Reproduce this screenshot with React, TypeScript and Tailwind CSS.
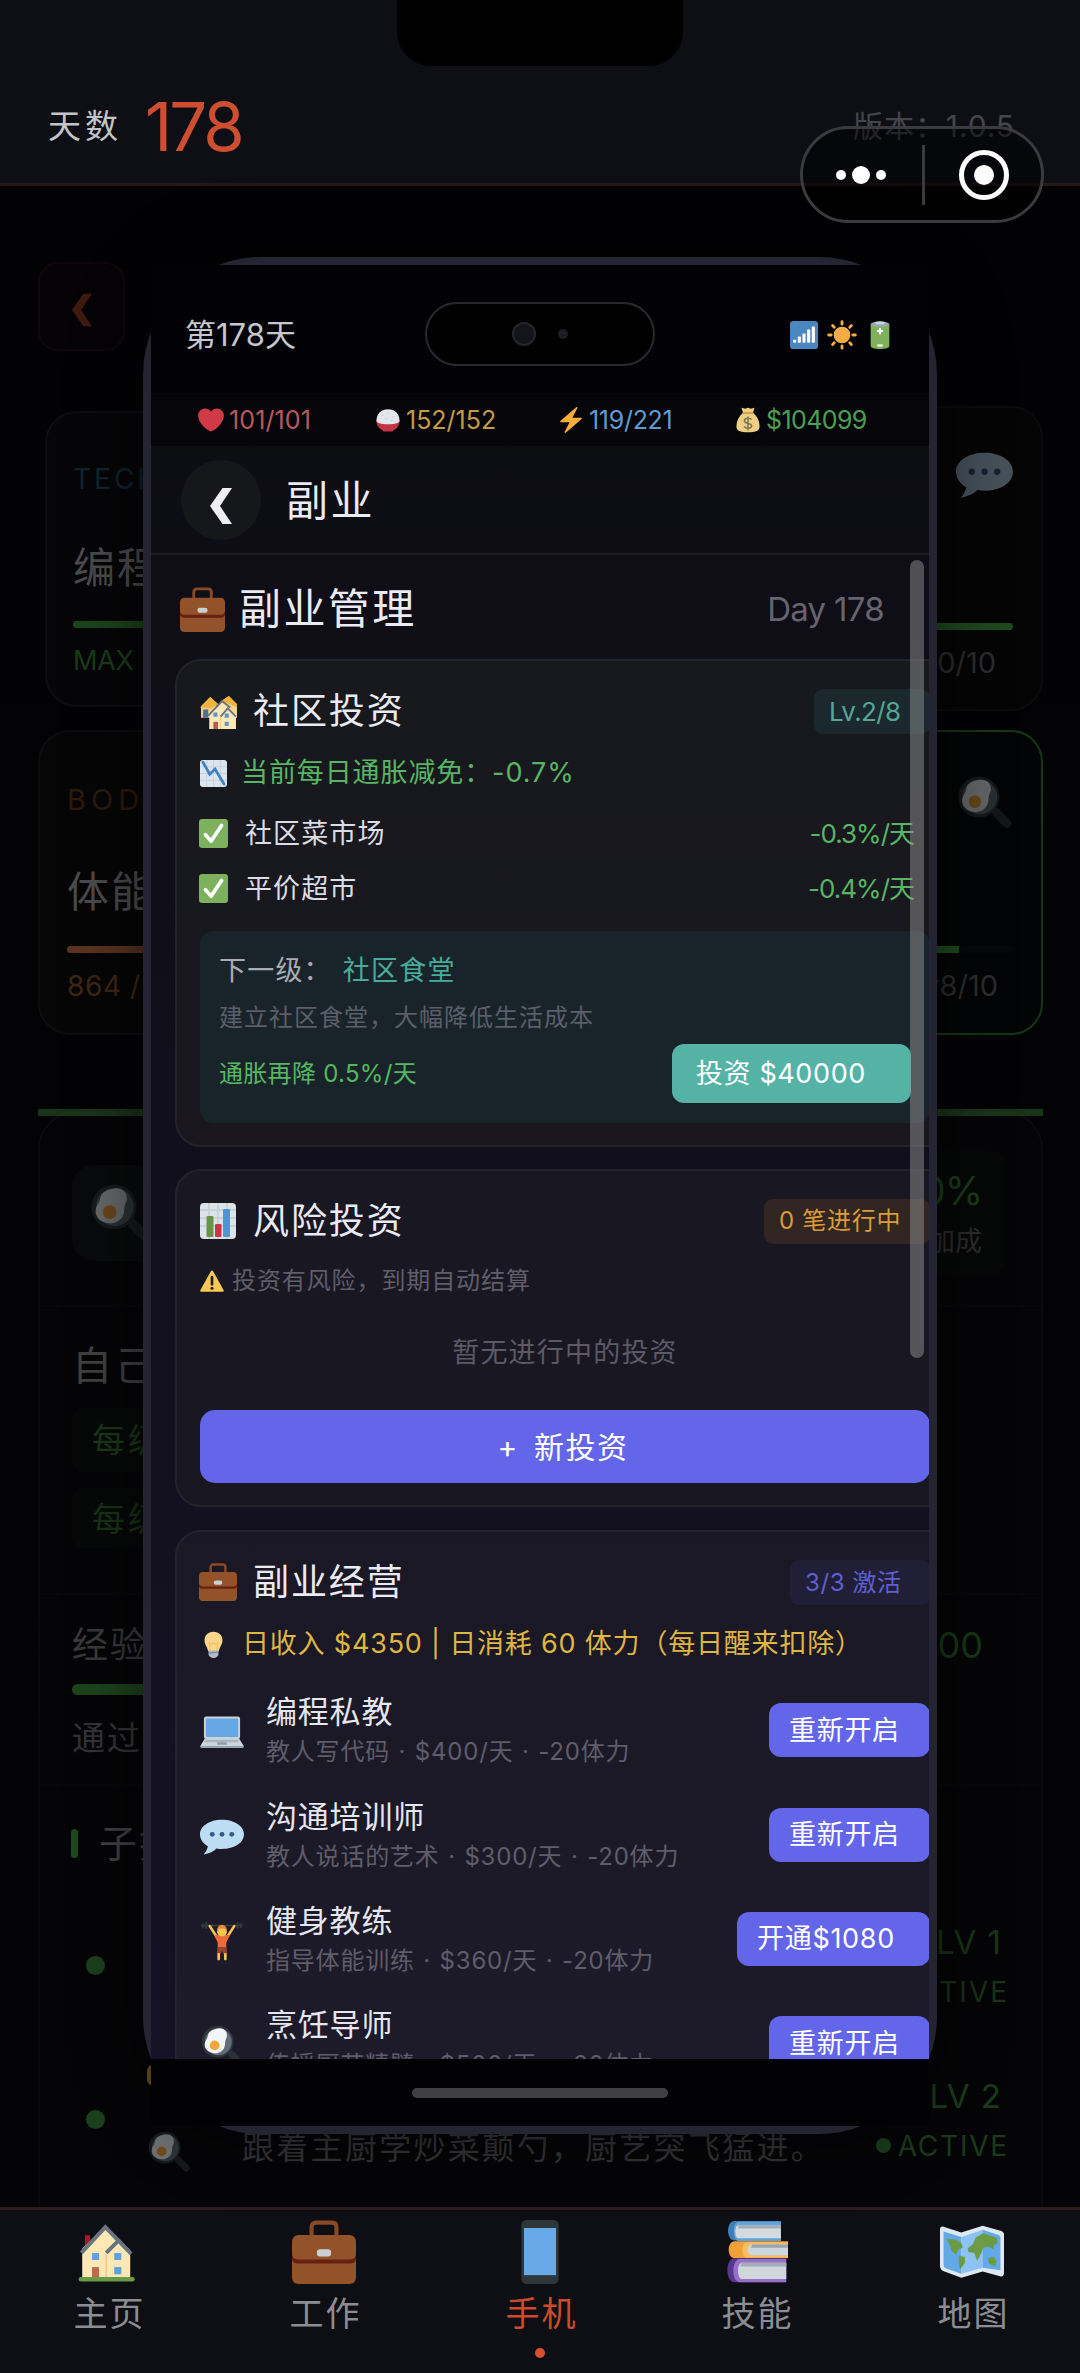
import clsx from "clsx";
import React from "react";

type IconProps = {
  className?: string;
};

function Svg({ className, children }: IconProps & { children: React.ReactNode }) {
  return (
    <svg viewBox="0 0 36 36" className={clsx("shrink-0", className)}>
      {children}
    </svg>
  );
}

function SignalIcon({ className }: IconProps) {
  return (
    <Svg className={className}>
      <rect width="36" height="36" rx="4" fill="#4a86bf" />
      <g fill="#fff">
        <rect x="4" y="24" width="4" height="4" rx="1" />
        <rect x="10" y="20" width="4" height="8" rx="1" />
        <rect x="16" y="16" width="4" height="12" rx="1" />
        <rect x="22" y="11" width="4" height="17" rx="1" />
        <rect x="28" y="7" width="4" height="21" rx="1" />
      </g>
    </Svg>
  );
}

function SunIcon({ className }: IconProps) {
  return (
    <Svg className={className}>
      <circle cx="18" cy="18" r="10" fill="#f3ac44" />
      <path
        d="M18 2v3M18 31v3M2 18h3M31 18h3M6.7 6.7l2 2M27.3 27.3l2 2M6.7 29.3l2-2M27.3 8.7l2-2"
        stroke="#f3ac44"
        strokeWidth="3.4"
        strokeLinecap="round"
      />
    </Svg>
  );
}

function BatteryIcon({ className }: IconProps) {
  return (
    <Svg className={className}>
      <path d="M6 4h24v28c0 2-5 4-12 4S6 34 6 32z" fill="#7eb15a" />
      <ellipse cx="18" cy="4" rx="12" ry="3.6" fill="#99aab5" />
      <ellipse cx="18" cy="2.5" rx="6" ry="2" fill="#ccd6dd" />
      <path d="M18 9v8M14 13h8M14.5 31.5h7" stroke="#fff" strokeWidth="2.6" />
    </Svg>
  );
}

function HeartIcon({ className }: IconProps) {
  return (
    <Svg className={className}>
      <path
        fill="#d03a46"
        d="M35.885 11.833c0-5.45-4.418-9.868-9.867-9.868-3.308 0-6.227 1.633-8.018 4.129-1.791-2.496-4.71-4.129-8.017-4.129-5.45 0-9.868 4.417-9.868 9.868 0 .772.098 1.52.266 2.241C1.751 22.587 11.216 31.568 18 34.034c6.783-2.466 16.249-11.447 17.617-19.959.17-.721.268-1.469.268-2.242z"
      />
    </Svg>
  );
}

function RiceIcon({ className }: IconProps) {
  return (
    <Svg className={className}>
      <path d="M2 19h32c0 7-4 11-9 13.500V34H11v-1.500C6 30 2 26 2 19z" fill="#c23542" />
      <path d="M2 19C2 9 9 3 18 3s16 6 16 16c0 3-6 5-16 5S2 22 2 19z" fill="#e3e6ea" />
      <path d="M9 12l3-1M17 8l3 1M24 13l2 1M14 17l3-1M22 19l3-1" stroke="#c5ced6" strokeWidth="1.300" />
    </Svg>
  );
}

function BoltIcon({ className }: IconProps) {
  return (
    <Svg className={className}>
      <path
        fill="#fbab38"
        d="M32.938 15.651C32.792 15.26 32.418 15 32 15H19.925L26.89 1.458c.219-.426.106-.947-.271-1.243C26.437.071 26.218 0 26 0c-.233 0-.466.082-.653.243L18 6.588 3.347 19.243c-.316.273-.43.714-.284 1.105S3.582 21 4 21h12.075L9.11 34.542c-.219.426-.106.947.271 1.243.182.144.401.215.619.215.233 0 .466-.082.653-.243L18 29.412l14.653-12.655c.317-.273.43-.714.285-1.106z"
      />
    </Svg>
  );
}

function MoneyBagIcon({ className }: IconProps) {
  return (
    <Svg className={className}>
      <path
        d="M9 1l5 1.500L18 1l4 1.500L27 1l-2 7c6 5 9 12 9 19 0 6-5 8-16 8S2 33 2 27C2 20 5 13 11 8z"
        fill="#f0cf85"
      />
      <path d="M11.500 8.500h13" stroke="#c79a55" strokeWidth="2.200" strokeLinecap="round" />
      <path
        d="M23 17.500c-1-1.500-3-2-5-2-3 0-5 1.300-5 3.500 0 5 10 2.500 10 7 0 2.200-2 3.500-5 3.500-2.500 0-4.500-1-5.500-2.500M18 13v19.500"
        fill="none"
        stroke="#7d7b55"
        strokeWidth="2.200"
      />
    </Svg>
  );
}

function BriefcaseIcon({ className }: IconProps) {
  return (
    <Svg className={className}>
      <path
        d="M11 9V4c0-1.600 1-2.500 2.500-2.500h9C24 1.500 25 2.400 25 4v5"
        fill="none"
        stroke="#8a4b24"
        strokeWidth="2.300"
      />
      <rect y="8.500" width="36" height="27.500" rx="3.500" fill="#92522a" />
      <path d="M0 19v2.500c0 2 1.500 3 3.500 3h29c2 0 3.500-1 3.500-3V19c0 2-1.500 3.200-3.500 3.200h-29C1.500 22.200 0 21 0 19z" fill="#662113" />
      <rect x="14" y="16.500" width="8" height="4" rx="1.800" fill="#ccd0d3" />
    </Svg>
  );
}

function HousesIcon({ className }: IconProps) {
  return (
    <Svg className={className}>
      <path d="M1 13l9-9 6 6v14H1z" fill="#f0d591" />
      <path d="M0 14l10-10 8 7-8 4z" fill="#f2b23f" />
      <path d="M21 8l7-5 8 8v13H22z" fill="#f0d591" />
      <path d="M19 9l9-6 8 8v3l-9-4z" fill="#f2b23f" />
      <path d="M3 16h5v8H3z" fill="#4f6f94" />
      <path d="M9 21l12-12 14 12v14H9z" fill="#ffe8b6" />
      <path d="M8 22L21.500 8l8 6M20 23l7-8 8 8" fill="none" stroke="#66757f" strokeWidth="1.800" />
      <path d="M20 23v12" stroke="#f4cf87" />
      <path d="M13 19h4v4h-4zM24 20h4v4h-4zM24 28h4v4h-4z" fill="#5c98cf" />
      <path d="M13 28h4.500v7H13z" fill="#b55b4a" />
    </Svg>
  );
}

function ChartDownIcon({ className }: IconProps) {
  return (
    <Svg className={className}>
      <rect width="36" height="36" rx="4" fill="#dde6ee" />
      <path d="M9 0v36M18 0v36M27 0v36M0 9h36M0 18h36M0 27h36" stroke="#c3d0db" strokeWidth="1.200" />
      <path d="M4 3l9 16 7-7 12 20" fill="none" stroke="#3f83c2" strokeWidth="3.600" strokeLinecap="round" />
    </Svg>
  );
}

function CheckIcon({ className }: IconProps) {
  return (
    <Svg className={className}>
      <rect width="36" height="36" rx="4" fill="#7eb15d" />
      <path d="M8 19.500l7 8L28 8" fill="none" stroke="#fff" strokeWidth="4.600" strokeLinecap="round" strokeLinejoin="round" />
    </Svg>
  );
}

function BarChartIcon({ className }: IconProps) {
  return (
    <Svg className={className}>
      <rect width="36" height="36" rx="4" fill="#dce3e9" />
      <path d="M9 0v36M18 0v36M27 0v36M0 7h36M0 15h36M0 23h36" stroke="#c0ccd6" strokeWidth="1.400" />
      <rect x="6.500" y="13" width="7" height="21" rx="1" fill="#6a9445" />
      <rect x="15" y="21" width="6.500" height="13" rx="1" fill="#cf3346" />
      <rect x="23" y="6" width="7" height="28" rx="1" fill="#5294d2" />
    </Svg>
  );
}

function WarningIcon({ className }: IconProps) {
  return (
    <Svg className={className}>
      <path d="M16.300 3.200c.8-1.400 2.600-1.400 3.400 0L35.300 31.500c.8 1.400 0 2.500-1.500 2.500H2.200C.7 34-.1 32.900.7 31.500z" fill="#f8c756" />
      <path d="M18 12v11" stroke="#231f20" strokeWidth="4" strokeLinecap="round" />
      <circle cx="18" cy="29" r="2.300" fill="#231f20" />
    </Svg>
  );
}

function BulbIcon({ className }: IconProps) {
  return (
    <Svg className={className}>
      <path d="M18 1C10.500 1 6 6 6 12.500c0 5 3.500 8 5 14.500h14c1.500-6.500 5-9.500 5-14.500C30 6 25.500 1 18 1z" fill="#f9d68c" />
      <path d="M14 27l-2-12 4 3 2-3 2 3 4-3-2 12" fill="none" stroke="#f3ba50" strokeWidth="1.200" />
      <path d="M11.500 26h13v6c0 1-3 4-6.500 4s-6.500-3-6.500-4z" fill="#aebac4" />
      <path d="M11.500 29.500l13-1.500" stroke="#7c8a95" strokeWidth="1.500" />
    </Svg>
  );
}

function LaptopIcon({ className }: IconProps) {
  return (
    <Svg className={className}>
      <rect x="3.200" y="4.500" width="29.600" height="18.500" rx="2" fill="#c9d3da" />
      <rect x="4.800" y="6.100" width="26.400" height="15.200" rx=".8" fill="#66a8e5" />
      <path d="M4 22.500h28L36 29H0z" fill="#ccd6dd" />
      <path d="M5 23.500h26l.8 2H4.200z" fill="#a9b6c0" />
      <path d="M14.500 25.500h7l.8 2.200h-8.600z" fill="#8f9da8" />
      <path d="M0 28.800h36c0 1-.8 1.500-1.500 1.500h-33c-.7 0-1.500-.5-1.500-1.500z" fill="#9aaab5" />
    </Svg>
  );
}

function SpeechIcon({ className }: IconProps) {
  return (
    <Svg className={className}>
      <path
        d="M18 3C8 3 0 8 0 15c0 4.300 2.700 7.700 6.500 9.800C6 27.500 4.500 29.500 3 31.500c4.500-1 8.500-2.500 10.500-4.900 1.500.3 3 .4 4.500.4 10 0 18-5 18-12S28 3 18 3z"
        fill="#bdddf4"
      />
      <g fill="#33588a">
        <circle cx="10" cy="15" r="2" />
        <circle cx="18" cy="15" r="2" />
        <circle cx="26" cy="15" r="2" />
      </g>
    </Svg>
  );
}

function LifterIcon({ className }: IconProps) {
  return (
    <Svg className={className}>
      <path d="M1 4.500h34" stroke="#3a4347" strokeWidth="1.100" />
      <path d="M2.500 3.500v2.500M5 2.500v4M31 2.500v4M33.500 3.500v2.500" stroke="#30383c" strokeWidth="1.800" strokeLinecap="round" />
      <path d="M8 5l5.500 8.500M28 5l-5.500 8.500" stroke="#f5c24b" strokeWidth="2.200" strokeLinecap="round" />
      <path d="M11.500 12.500l3.500-.5h6l3.500.5-3 6v5h-7v-5z" fill="#ec6a3c" />
      <circle cx="18" cy="9.500" r="4" fill="#f6c64f" />
      <path d="M14 8.500c0-6 8-6 8 0-2-2-6-2-8 0z" fill="#f08b38" />
      <path d="M14.300 22h7.400l.6 6h-3.200L18 25l-1.100 3h-3.200z" fill="#99412f" />
      <path d="M15.300 28v4M20.700 28v4" stroke="#f6c64f" strokeWidth="2.200" strokeLinecap="round" />
    </Svg>
  );
}

function EggIcon({ className }: IconProps) {
  return (
    <Svg className={className}>
      <path d="M23 23l3-2 8 8c3 3-1 7-4 4l-7-7z" fill="#2a3237" />
      <circle cx="14.500" cy="14.500" r="13" fill="#2d363b" />
      <circle cx="15" cy="14.500" r="11" fill="#616e77" />
      <path d="M13 4c5-1.500 9.500 1 9 6-.3 2-1.500 3-1.500 6 0 5-4 8.500-9 8S3 20 4 15.500C4.600 13 6 12.500 6.500 9.500 7 6.500 9 5 13 4z" fill="#f2f4f5" />
      <circle cx="12" cy="17.500" r="4" fill="#f5a63a" />
    </Svg>
  );
}

function HouseIcon({ className }: IconProps) {
  return (
    <Svg className={className}>
      <path d="M5 8.500h3V16H5z" fill="#a01c26" />
      <path d="M3.500 16L17 4l13.500 13v16.500h-27z" fill="#ffe8b6" />
      <path d="M3 18.500L16.500 4 30.500 18.500M17 18.500l7-7 7 7.500" fill="none" stroke="#66757f" strokeWidth="2.200" />
      <path d="M17 19v14" stroke="#f0cd83" strokeWidth="1" />
      <path d="M9 18.500h4v4H9zM21.500 18.500h4v4h-4zM21.500 26.500h4v4h-4z" fill="#5da3e0" />
      <path d="M9 26.500h4V33H9z" fill="#c1694f" />
      <rect x="1.500" y="32" width="31.500" height="2.600" rx="1.300" fill="#699a45" />
    </Svg>
  );
}

function PhoneIcon({ className }: IconProps) {
  return (
    <Svg className={className}>
      <rect x="7.500" width="21" height="36" rx="3" fill="#2f363b" />
      <rect x="9" y="4.500" width="18" height="26.500" fill="#68a9e8" />
    </Svg>
  );
}

function BooksIcon({ className }: IconProps) {
  return (
    <Svg className={className}>
      <path d="M6 .5h26v11H6c-5 0-5-11 0-11z" fill="#3f7fb8" />
      <path d="M8.500 1h23.500v11H8.500c-4 0-4-11 0-11z" fill="#62a5de" />
      <path d="M8 3h24v7.200H8c-2.200 0-2.200-7.200 0-7.200z" fill="#d5dade" />
      <path d="M8 3h24v1.800H8z" fill="#a3adb5" />
      <path d="M6 12h30v2h-1v5.500h1v2H6c-4.500 0-4.500-9.500 0-9.500z" fill="#f1a038" />
      <path d="M13 12.500h23v1.300H16c-3 0-3 6.200 0 6.200h20v1.300H13c-3.500 0-3.500-8.800 0-8.800z" fill="#f7bd62" />
      <path d="M16 13.800h20V20H16c-3.500 0-3.500-6.200 0-6.200z" fill="#ccd6dd" />
      <path d="M16 13.800h20v1.800H15z" fill="#9aa5ad" />
      <path d="M6 21.500h29V35H6c-5.500 0-5.500-13.500 0-13.500z" fill="#57388c" />
      <path d="M9 22h26v13H9c-5 0-5-13 0-13z" fill="#9671c6" />
      <path d="M10 24h25v9.200H10c-2.800 0-2.800-9.200 0-9.200z" fill="#d0d8de" />
      <path d="M10 24h25v2.200H9z" fill="#a3adb5" />
    </Svg>
  );
}

function MapIcon({ className }: IconProps) {
  return (
    <Svg className={className}>
      <path d="M0 5c0-1 1-1.600 2-1.200L12 7l12-3.800L34 6c1.200.4 2 1 2 2v22c0 1.500-1 2-2.200 1.600L24 29l-12 3.500L2.500 29C1 28.500 0 27.500 0 26z" fill="#dde8f0" />
      <path d="M2 6.500L12 9.500v20.800L3.500 27.300C2.500 27 2 26.200 2 25.200z" fill="#63a9ea" />
      <path d="M12 9.500l12-4v21.300l-12 3.500z" fill="#8cc3f4" />
      <path d="M24 5.500l8.500 2.800c1 .3 1.500.8 1.500 1.700v18.300L24 26.800z" fill="#63a9ea" />
      <path
        d="M3.500 10.500l5 .5 3.500 2 .8 2.500L10 17l-.8 2.500L6.500 17.500 5.500 14zM10.500 20l3.500.8v3.200l-2.700 4-.8-4.500zM15.500 16l3-2.500L20 10l4-2.500 8 2.500.5 3-2 1-.5 2.500-2.500-1.500-3 .5-1 2.500L21 23l-1.700-4.500-3.300-.5zM27 21.500l3-.8 2 2.300-1 3-3.500-1.500z"
        fill="#6b9c45"
      />
    </Svg>
  );
}

function Chevron({ className }: IconProps) {
  return (
    <svg viewBox="0 0 22 36" className={className} fill="currentColor">
      <path d="M12.500 0H22L10 18l12 18h-9.500L0 18z" />
    </svg>
  );
}

const stats = [
  { icon: HeartIcon, value: "101/101", className: "w-[177px] text-[#b8585e] tracking-[0.1px]" },
  { icon: RiceIcon, value: "152/152", className: "w-[183px] text-[#c49b45]" },
  { icon: BoltIcon, value: "119/221", className: "w-[177px] text-[#5f9bd0] tracking-[-0.3px]" },
  { icon: MoneyBagIcon, value: "$104099", className: "text-[#4a9f53] tracking-[-0.6px]" },
];

const built = [
  { name: "社区菜市场", effect: "-0.3%/天" },
  { name: "平价超市", effect: "-0.4%/天" },
];

const jobs = [
  { icon: LaptopIcon, name: "编程私教", desc: "教人写代码 · $400/天 · -20体力", action: "重新开启", width: "w-[161px]" },
  { icon: SpeechIcon, name: "沟通培训师", desc: "教人说话的艺术 · $300/天 · -20体力", action: "重新开启", width: "w-[161px]" },
  { icon: LifterIcon, name: "健身教练", desc: "指导体能训练 · $360/天 · -20体力", action: "开通$1080", width: "w-[193px]" },
  { icon: EggIcon, name: "烹饪导师", desc: "传授厨艺精髓 · $500/天 · -20体力", action: "重新开启", width: "w-[161px]" },
];

const tabs = [
  { icon: HouseIcon, label: "主页" },
  { icon: BriefcaseIcon, label: "工作" },
  { icon: PhoneIcon, label: "手机", active: true },
  { icon: BooksIcon, label: "技能" },
  { icon: MapIcon, label: "地图" },
];

function TopBar() {
  return (
    <header className="flex h-[186px] shrink-0 items-center justify-between border-b-[3px] border-[#2a1517] bg-[#0d0f15] pl-[48px] pr-[65px] pt-[68px]">
      <div className="flex items-center">
        <span className="text-[33px] leading-[40px] tracking-[4px] text-[#c3c4ca]">天数</span>
        <span className="ml-[23px] pt-[2px] text-[67px] leading-[67px] tracking-[-3px] text-[#cf4e30]">178</span>
      </div>
      <span className="text-[30px] leading-[30px] tracking-[0.9px] text-[#45464d]">版本：1.0.5</span>
    </header>
  );
}

function SkillsPage() {
  return (
    <main className="isolate flex-1 overflow-hidden bg-gradient-to-b from-[#020204] to-[#040408] pl-[38px] pr-[37px]">
      <div className="mt-[76px] flex h-[89px] w-[87px] items-center justify-center rounded-[20px] border-2 border-[#110709] bg-[#050305] pt-[6px]">
        <Chevron className="h-[34px] w-[20px] text-[#3f1a10]" />
      </div>

      <div className="mt-[55px] flex h-[305px] items-center justify-between">
        <div className="ml-[7px] h-[296px] w-[460px] rounded-[32px] border-2 border-[#0e0e12] bg-[#060608] pl-[26px] pt-[43px]">
          <div className="h-[42px] text-[28px] leading-[46px] tracking-[3px] text-[#10232d]">TECH</div>
          <div className="mt-[48px] h-[44px] text-[42px] leading-[44px] tracking-[2px] text-[#4b4b4e]">编程</div>
          <div className="mt-[31px] h-[7px] rounded-full bg-[#1c451c]" />
          <div className="mt-[13px] text-[27px] leading-[40px] tracking-[-0.3px] text-[#1a3c1a]">MAX</div>
        </div>
        <div className="flex h-[305px] w-[460px] flex-col items-end rounded-[32px] border-2 border-[#0b0b0e] bg-[#050506] pr-[28px] pt-[40px]">
          <SpeechIcon className="size-[57px] opacity-35" />
          <div className="mt-[118px] h-[7px] w-full rounded-full bg-[#1e4a1d]" />
          <div className="mt-[13px] pr-[17px] text-[29px] leading-[40px] text-[#2c2c2f]">0/10</div>
        </div>
      </div>

      <div className="mt-[19px] flex h-[305px] justify-between">
        <div className="w-[467px] rounded-[32px] border-2 border-[#0d0d10] bg-[#060607] pl-[27px] pt-[47px]">
          <div className="h-[42px] text-[29px] leading-[42px] tracking-[5px] text-[#2e190f]">BODY</div>
          <div className="mt-[49px] h-[44px] text-[42px] leading-[44px] tracking-[2px] text-[#4b4b4e]">体能</div>
          <div className="mt-[32px] h-[7px] rounded-full bg-[#5a341e]" />
          <div className="mt-[13px] text-[28px] leading-[40px] tracking-[0.6px] text-[#3f2614]">864 /</div>
        </div>
        <div className="flex w-[460px] flex-col items-end rounded-[32px] border-2 border-[#163616] bg-[#030405] pr-[28px] pt-[42px]">
          <EggIcon className="size-[57px] opacity-40" />
          <div className="mt-[115px] h-[7px] w-full rounded-full bg-[#07080a]">
            <div className="h-full w-[374px] bg-[#1f4d1d]" />
          </div>
          <div className="mt-[13px] pr-[15px] text-[29px] leading-[40px] text-[#2c2c2f]">v8/10</div>
        </div>
      </div>

      <div className="relative z-10 mt-[74px] h-[7px] bg-[#1a341a]" />
      <div className="-mt-[5px] h-[1100px] rounded-t-[38px] border-2 border-[#0b0b0f] bg-[#050507] text-[#414144]">
        <div className="flex h-[194px] items-center justify-between border-b-2 border-[#070709] pl-[32px] pr-[34px] pt-[8px]">
          <div className="flex h-[96px] w-[96px] items-center justify-center rounded-[22px] bg-[#090a0b]">
            <EggIcon className="size-[62px] opacity-40" />
          </div>
          <div className="flex h-[124px] w-[170px] flex-col items-end justify-center rounded-[18px] bg-[#060807] pr-[25px] pt-[8px]">
            <span className="text-[39px] leading-[50px] tracking-[-1px] text-[#1a3c19]">50%</span>
            <span className="text-[27px] leading-[52px] text-[#2c2c2f]">加成</span>
          </div>
        </div>
        <div className="border-b-2 border-[#070709] pl-[32px]">
          <div className="mt-[29px] h-[60px] text-[40px] leading-[60px] tracking-[3px]">自己</div>
          <div className="mt-[12px] h-[64px] w-[300px] rounded-[12px] bg-[#060908] pl-[20px] text-[33px] leading-[64px] tracking-[3px] text-[#1a3817]">每级</div>
          <div className="mb-[45px] mt-[16px] h-[60px] w-[300px] rounded-[12px] bg-[#060908] pl-[20px] text-[33px] leading-[62px] tracking-[3px] text-[#183415]">每级</div>
        </div>
        <div className="border-b-2 border-[#070709] pl-[32px] pr-[34px]">
          <div className="mt-[30px] flex h-[40px] items-center justify-between pr-[24px] text-[36px] leading-[40px]">
            <span className="tracking-[2px] text-[#39393c]">经验</span>
            <span className="text-[#183817]">00</span>
          </div>
          <div className="mt-[19px] h-[11px] w-[600px] rounded-full bg-[#1d441d]" />
          <div className="mb-[26px] mt-[23px] h-[40px] text-[33px] leading-[40px] tracking-[2px] text-[#343437]">通过</div>
        </div>
        <div className="mt-[37px] flex h-[40px] items-center pl-[31px]">
          <div className="h-[29px] w-[7px] rounded-full bg-[#1c4a1e]" />
          <span className="ml-[21px] text-[38px] leading-[40px] tracking-[2px]">子技</span>
        </div>
        <div className="mt-[25px] flex h-[154px] items-center pl-[46px] pr-[32px]">
          <div className="size-[19px] rounded-full bg-[#1c401c]" />
          <div className="ml-auto flex flex-col items-end pt-[3px] text-[#193419]">
            <span className="pr-[7px] text-[33px] leading-[50px] tracking-[1px]">LV 1</span>
            <span className="text-[28px] leading-[50px] tracking-[2px]">TIVE</span>
          </div>
        </div>
        <div className="flex h-[154px] items-center pl-[46px] pr-[32px]">
          <div className="size-[19px] rounded-full bg-[#1c401c]" />
          <div className="ml-[42px] flex w-[44px] flex-col items-center gap-[44px]">
            <div className="mr-auto h-[22px] w-[14px] rounded-full bg-[#6b5516]" />
            <EggIcon className="size-[44px] opacity-45" />
          </div>
          <span className="ml-[51px] mt-[58px] text-[32px] leading-[40px] tracking-[2.300px] text-[#363639]">
            跟着主厨学炒菜颠勺，厨艺突飞猛进。
          </span>
          <div className="ml-auto flex flex-col items-end pt-[3px] text-[#1b3a1c]">
            <span className="pr-[7px] text-[33px] leading-[50px] tracking-[1px]">LV 2</span>
            <span className="flex items-center gap-[7px] text-[28px] leading-[50px] tracking-[1.800px]">
              <i className="size-[15px] rounded-full bg-[#1a3f1b]" />
              ACTIVE
            </span>
          </div>
        </div>
      </div>
    </main>
  );
}

function TabBar() {
  return (
    <nav className="flex h-[166px] shrink-0 border-t-[3px] border-[#2f1b1d] bg-[#0d0f14]">
      {tabs.map(({ icon: Icon, label, active }) => (
        <div key={label} className="flex flex-1 flex-col items-center pt-[10px]">
          <Icon className="size-[64px]" />
          <span
            className={clsx(
              "mt-[9px] pl-[3px] text-[34px] leading-[42px] tracking-[2px]",
              active ? "text-[#cf4a2c]" : "text-[#8c8d93]"
            )}
          >
            {label}
          </span>
          {active && <div className="mt-[13px] size-[10px] rounded-full bg-[#d5502f]" />}
        </div>
      ))}
    </nav>
  );
}

function StatusBar() {
  return (
    <div className="grid h-[128px] grid-cols-[1fr_230px_1fr] items-center bg-[#020206] pt-[10px]">
      <span className="pl-[34px] pt-[1px] text-[31px] leading-[40px] text-[#c6c7cd]">第178天</span>
      <div className="relative h-[64px] rounded-full border-2 border-[#29292f] bg-black">
        <div className="absolute left-[85px] top-[18px] size-[24px] rounded-full border-2 border-[#25252d] bg-[#14141b]" />
        <div className="absolute left-[131px] top-[25px] size-[10px] rounded-full bg-[#1d1d25]" />
      </div>
      <div className="flex items-center justify-end gap-[9px] pr-[35px] pt-[1px]">
        <SignalIcon className="size-[28px]" />
        <SunIcon className="size-[30px]" />
        <BatteryIcon className="size-[28px]" />
      </div>
    </div>
  );
}

type CardProps = {
  icon: React.ReactNode;
  title: string;
  badge: string;
  badgeClass: string;
  className?: string;
  children: React.ReactNode;
};

function Card({ icon, title, badge, badgeClass, className, children }: CardProps) {
  return (
    <section
      className={clsx(
        "ml-[24px] w-[790px] shrink-0 rounded-[26px] border-2 border-[#23232b] pl-[23px]",
        className
      )}
    >
      <div className="w-[730px]">
        <div className="mt-[15px] flex h-[70px] items-center">
          <div className="flex w-[53px]">{icon}</div>
          <h2 className="text-[36px] leading-[40px] tracking-[1.900px] text-[#eaeaf2]">{title}</h2>
          <span className={clsx("ml-auto flex h-[45px] items-center rounded-[9px] pl-[15px] leading-none", badgeClass)}>
            {badge}
          </span>
        </div>
        {children}
      </div>
    </section>
  );
}

function SideJobs() {
  return (
    <div className="relative flex h-[1504px] flex-col overflow-hidden bg-gradient-to-b from-[#0f0d16] to-[#151225]">
      <div className="flex h-[104px] shrink-0 items-center pl-[29px] pr-[45px] pt-[4px]">
        <BriefcaseIcon className="size-[45px]" />
        <h1 className="ml-[14px] text-[42px] leading-[48px] tracking-[2.400px] text-[#ebebf3]">副业管理</h1>
        <span className="ml-auto text-[33px] leading-[40px] tracking-[-0.700px] text-[#66646f]">Day 178</span>
      </div>

      <Card
        icon={<HousesIcon className="size-[37px]" />}
        title="社区投资"
        badge="Lv.2/8"
        badgeClass="w-[116px] bg-[#1b282d] pt-[2px] text-[26px] tracking-[-0.600px] text-[#53a698]"
        className="h-[488px] bg-gradient-to-b from-[#17191d] to-[#191620]"
      >
        <div className="mt-[7px] flex h-[40px] items-center">
          <ChartDownIcon className="size-[27px]" />
          <span className="ml-[14px] text-[27px] leading-[40px] tracking-[0.900px] text-[#58b563]">当前每日通胀减免：-0.7%</span>
        </div>
        <div className="mt-[13px]">
          {built.map((item) => (
            <div key={item.name} className="flex h-[55px] items-center text-[27px] leading-[40px]">
              <CheckIcon className="-ml-[1px] size-[29px]" />
              <span className="ml-[17px] tracking-[1.100px] text-[#dcdce4]">{item.name}</span>
              <span className="ml-auto pr-[16px] text-[26px] tracking-[-1px] text-[#58b563]">{item.effect}</span>
            </div>
          ))}
        </div>
        <div className="mt-[15px] h-[192px] rounded-[13px] bg-[#19242a] pl-[19px] pr-[19px] pt-[20px]">
          <div className="flex h-[40px] items-center text-[27px] leading-[40px] tracking-[1.200px]">
            <span className="text-[#a9acb4]">下一级：</span>
            <span className="ml-[11px] text-[#49ab99]">社区食堂</span>
          </div>
          <div className="mt-[9px] h-[36px] text-[24px] leading-[36px] tracking-[1px] text-[#5b5f69]">
            建立社区食堂，大幅降低生活成本
          </div>
          <div className="mt-[8px] flex items-center justify-between">
            <span className="text-[24px] leading-[36px] tracking-[0.300px] text-[#55b860]">通胀再降 0.5%/天</span>
            <button className="flex h-[59px] w-[239px] items-center rounded-[12px] bg-[#55b3a6] pl-[24px] text-[27px] leading-none tracking-[0.600px] text-white">
              投资 $40000
            </button>
          </div>
        </div>
      </Card>

      <Card
        icon={<BarChartIcon className="size-[36px]" />}
        title="风险投资"
        badge="0 笔进行中"
        badgeClass="w-[166px] bg-[#312621] text-[24px] tracking-[0.700px] text-[#dc9b38]"
        className="mt-[22px] h-[338px] bg-[#191722]"
      >
        <div className="mt-[7px] flex h-[36px] items-center">
          <WarningIcon className="size-[24px]" />
          <span className="ml-[8px] text-[24px] leading-[36px] tracking-[0.900px] text-[#605e6a]">投资有风险，到期自动结算</span>
        </div>
        <div className="mt-[34px] h-[40px] text-center text-[27px] leading-[40px] tracking-[1.200px] text-[#5c5a66]">
          暂无进行中的投资
        </div>
        <button className="mt-[37px] flex h-[73px] w-full items-center justify-center rounded-[15px] bg-[#6366e8] pr-[4px] text-[30px] leading-none tracking-[1.500px] text-white">
          <span className="mr-[15px]">+</span>
          <span>新投资</span>
        </button>
      </Card>

      <Card
        icon={<BriefcaseIcon className="-ml-[1px] size-[38px]" />}
        title="副业经营"
        badge="3/3 激活"
        badgeClass="w-[140px] bg-[#211f37] pt-[2px] text-[24px] tracking-[0.600px] text-[#5f60d0]"
        className="mt-[23px] h-[700px] bg-gradient-to-b from-[#1a1824] to-[#1e1b2b]"
      >
        <div className="mt-[7px] flex h-[40px] items-center">
          <BulbIcon className="size-[27px]" />
          <span className="ml-[15px] whitespace-nowrap text-[27px] leading-[40px] tracking-[0.800px] text-[#dfb543]">
            日收入 $4350 | 日消耗 60 体力（每日醒来扣除）
          </span>
        </div>
        <div className="mt-[14px]">
          {jobs.map(({ icon: Icon, name, desc, action, width }) => (
            <div key={name} className="flex h-[104.400px] items-center">
              <Icon className="mt-[6px] size-[44px]" />
              <div className="ml-[22px] pt-[4px]">
                <div className="h-[40px] text-[31px] leading-[40px] tracking-[0.800px] text-[#e6e6ee]">{name}</div>
                <div className="h-[40px] text-[24px] leading-[40px] tracking-[0.800px] text-[#5f5d6a] [word-spacing:1px]">{desc}</div>
              </div>
              <button
                className={clsx(
                  "ml-auto flex h-[54px] items-center rounded-[12px] bg-[#6366e8] pl-[20px] text-[27px] leading-none tracking-[0.700px] text-white",
                  width
                )}
              >
                {action}
              </button>
            </div>
          ))}
        </div>
      </Card>

      <div className="absolute right-[5px] top-[5px] h-[798px] w-[14px] rounded-full bg-[#919191]/50" />
    </div>
  );
}

function PhoneModal() {
  return (
    <div className="absolute left-[143px] top-[257px] w-[794px] rounded-[118px] bg-[#252433] p-[8px] shadow-[0_0_60px_10px_rgba(0,0,0,0.5)]">
      <StatusBar />
      <div className="flex h-[53px] items-center bg-[#06060a] pl-[47px] pt-[1px] text-[25px] leading-none">
        {stats.map(({ icon: Icon, value, className }) => (
          <div key={value} className={clsx("flex items-center gap-[5px]", className)}>
            <Icon className="size-[26px]" />
            {value}
          </div>
        ))}
      </div>
      <div className="flex h-[109px] items-center border-b-2 border-[#1b1b22] bg-gradient-to-b from-[#0d0e12] to-[#0e0d16] pl-[30px]">
        <div className="flex size-[80px] items-center justify-center rounded-full bg-[#16171b] pt-[13px]">
          <Chevron className="h-[36px] w-[22px] text-[#eeeef4]" />
        </div>
        <span className="ml-[25px] pt-[2px] text-[42px] leading-[48px] tracking-[2.400px] text-[#ebebf3]">副业</span>
      </div>
      <SideJobs />
      <div className="flex h-[67px] items-center justify-center bg-[#020205]">
        <div className="h-[10px] w-[256px] rounded-full bg-[#404042]" />
      </div>
    </div>
  );
}

function Capsule() {
  return (
    <div className="absolute left-[800px] top-[126px] flex h-[97px] w-[244px] items-center rounded-full border-[3px] border-[#3b3b3f] bg-black/50">
      <div className="flex w-[119px] items-center justify-center gap-[6px] pr-[4px]">
        <i className="size-[10px] rounded-full bg-white" />
        <i className="size-[18px] rounded-full bg-white" />
        <i className="size-[10px] rounded-full bg-white" />
      </div>
      <div className="h-[60px] w-[3px] bg-[#3b3b3f]" />
      <div className="flex flex-1 justify-center pl-[2px]">
        <div className="flex size-[50px] items-center justify-center rounded-full border-[5px] border-white">
          <div className="size-[20px] rounded-full bg-white" />
        </div>
      </div>
    </div>
  );
}

export default function App() {
  return (
    <div className="relative flex h-[2373px] w-[1080px] flex-col overflow-hidden bg-[#020204] font-['Inter','Noto_Sans_CJK_SC',sans-serif]">
      <TopBar />
      <SkillsPage />
      <TabBar />
      <div className="absolute left-[397px] top-0 h-[66px] w-[286px] rounded-b-[34px] bg-black" />
      <PhoneModal />
      <Capsule />
    </div>
  );
}
